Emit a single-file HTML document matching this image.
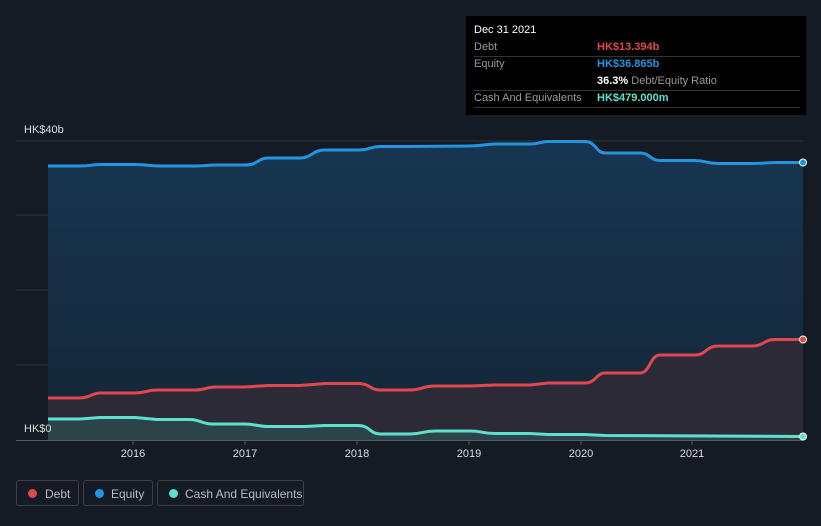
<!DOCTYPE html>
<html><head><meta charset="utf-8"><style>
body{margin:0;background:#151b24;font-family:"Liberation Sans",sans-serif;}
.w{position:relative;width:821px;height:526px;overflow:hidden;background:#151b24}
.tt{position:absolute;left:466px;top:16px;width:340px;height:99px;background:#000;font-size:11px;color:#999}
.tt .r{position:absolute;left:8px;right:6px;border-bottom:1px solid #333;height:17px;line-height:17px}
.lg{position:absolute;top:480px;height:26px;border:1px solid #3a3f48;border-radius:3px;color:#bbb;font-size:12px;line-height:26px;box-sizing:border-box}
.lg i{position:absolute;left:11px;top:8px;width:9px;height:9px;border-radius:50%}
</style></head><body><div class="w">
<svg width="821" height="526" style="position:absolute;left:0;top:0">
<defs><linearGradient id="g" x1="0" y1="0" x2="0" y2="1"><stop offset="0" stop-color="#173552"/><stop offset="1" stop-color="#142635"/></linearGradient></defs>
<g stroke="#2c3440" stroke-width="1"><line x1="16" y1="141" x2="803" y2="141"/><line x1="16" y1="215" x2="803" y2="215"/><line x1="16" y1="290" x2="803" y2="290"/><line x1="16" y1="365" x2="803" y2="365"/></g>
<path fill="url(#g)" d="M48,166 L80,166 C90,166 92,164.5 100,164.5 L135,164.5 C148,164.5 150,166 160,166 L195,166 C205,166 207,165 215,165 L245,165 C258,165 258,158 268,158 L300,158 C312,158 312,150 325,150 L358,150 C370,150 370,146.5 380,146.5 L410,146.5 L470,146 C484,146 484,144 495,144 L530,144 C540,144 540,141.5 548,141.5 L585,141.5 C596,141.5 596,153 605,153 L640,153 C650,153 650,160.5 660,160.5 L695,160.5 C706,160.5 706,163.5 718,163.5 L755,163.5 L775,162.5 L803,162.5 L803,440 L48,440Z"/>
<path fill="#2d2a38" d="M48,398 L80,398 C90,398 92,393 100,393 L135,393 C146,393 146,390 157,390 L195,390 C205,390 207,387 215,387 L245,387 L268,385.5 L300,385.5 L325,383.5 L358,383.5 C370,383.5 370,390 380,390 L410,390 C422,390 422,386 435,386 L470,386 L495,385 L530,385 L548,383 L585,383 C596,383 596,373 605,373 L640,373 C650,373 650,355 660,355 L695,355 C706,355 706,346 718,346 L752,346 C764,346 764,339.5 775,339.5 L803,339.5 L803,440 L48,440Z"/>
<path fill="#2b4349" d="M48,419 L80,419 L100,417.5 L135,417.5 L157,419.5 L190,419.5 C200,419.5 202,424 212,424 L245,424 C255,424 258,426.5 268,426.5 L305,426.5 L325,425.5 L358,425.5 C370,425.5 370,434 380,434 L410,434 C422,434 422,431 435,431 L470,431 C482,431 482,433.5 495,433.5 L530,433.5 L548,434.5 L585,434.5 L605,435.5 L803,436.5 L803,440 L48,440Z"/>
<g fill="none" stroke-width="3">
<path stroke="#2394df" d="M48,166 L80,166 C90,166 92,164.5 100,164.5 L135,164.5 C148,164.5 150,166 160,166 L195,166 C205,166 207,165 215,165 L245,165 C258,165 258,158 268,158 L300,158 C312,158 312,150 325,150 L358,150 C370,150 370,146.5 380,146.5 L410,146.5 L470,146 C484,146 484,144 495,144 L530,144 C540,144 540,141.5 548,141.5 L585,141.5 C596,141.5 596,153 605,153 L640,153 C650,153 650,160.5 660,160.5 L695,160.5 C706,160.5 706,163.5 718,163.5 L755,163.5 L775,162.5 L803,162.5"/>
<path stroke="#e0474f" d="M48,398 L80,398 C90,398 92,393 100,393 L135,393 C146,393 146,390 157,390 L195,390 C205,390 207,387 215,387 L245,387 L268,385.5 L300,385.5 L325,383.5 L358,383.5 C370,383.5 370,390 380,390 L410,390 C422,390 422,386 435,386 L470,386 L495,385 L530,385 L548,383 L585,383 C596,383 596,373 605,373 L640,373 C650,373 650,355 660,355 L695,355 C706,355 706,346 718,346 L752,346 C764,346 764,339.5 775,339.5 L803,339.5"/>
<path stroke="#5ee0cc" d="M48,419 L80,419 L100,417.5 L135,417.5 L157,419.5 L190,419.5 C200,419.5 202,424 212,424 L245,424 C255,424 258,426.5 268,426.5 L305,426.5 L325,425.5 L358,425.5 C370,425.5 370,434 380,434 L410,434 C422,434 422,431 435,431 L470,431 C482,431 482,433.5 495,433.5 L530,433.5 L548,434.5 L585,434.5 L605,435.5 L803,436.5"/>
</g>
<line x1="16" y1="440.5" x2="803" y2="440.5" stroke="#555b63"/>
<g stroke="#555b63"><line x1="133" y1="440" x2="133" y2="445"/><line x1="245" y1="440" x2="245" y2="445"/><line x1="357" y1="440" x2="357" y2="445"/><line x1="469" y1="440" x2="469" y2="445"/><line x1="581" y1="440" x2="581" y2="445"/><line x1="692" y1="440" x2="692" y2="445"/></g>
<circle cx="803" cy="162.5" r="3.5" fill="#2394df" stroke="#fff" stroke-width="1"/>
<circle cx="803" cy="339.5" r="3.5" fill="#e0474f" stroke="#fff" stroke-width="1"/>
<circle cx="803" cy="436.5" r="3.5" fill="#5ee0cc" stroke="#fff" stroke-width="1"/>
<g fill="#ddd" font-size="11" font-family="Liberation Sans,sans-serif">
<text x="24" y="133">HK$40b</text><text x="24" y="432">HK$0</text>
<g text-anchor="middle"><text x="133" y="457">2016</text><text x="245" y="457">2017</text><text x="357" y="457">2018</text><text x="469" y="457">2019</text><text x="581" y="457">2020</text><text x="692" y="457">2021</text></g></g>
</svg>
<div class="tt">
<div style="position:absolute;left:8px;top:8px;color:#fff">Dec 31 2021</div>
<div class="r" style="top:23px">Debt<span style="position:absolute;left:123px;color:#e0474f;font-weight:bold">HK$13.394b</span></div>
<div class="r" style="top:40px;border:none">Equity<span style="position:absolute;left:123px;color:#2394df;font-weight:bold">HK$36.865b</span></div>
<div class="r" style="top:57px"><span style="position:absolute;left:123px"><b style="color:#fff">36.3%</b> Debt/Equity Ratio</span></div>
<div class="r" style="top:74px">Cash And Equivalents<span style="position:absolute;left:123px;color:#5ee0cc;font-weight:bold">HK$479.000m</span></div>
</div>
<div class="lg" style="left:16px;width:63px"><i style="background:#e0474f"></i><span style="position:absolute;left:28px">Debt</span></div>
<div class="lg" style="left:83px;width:70px"><i style="background:#2394df"></i><span style="position:absolute;left:27px">Equity</span></div>
<div class="lg" style="left:157px;width:147px"><i style="background:#5ee0cc"></i><span style="position:absolute;left:27px">Cash And Equivalents</span></div>
</div></body></html>
